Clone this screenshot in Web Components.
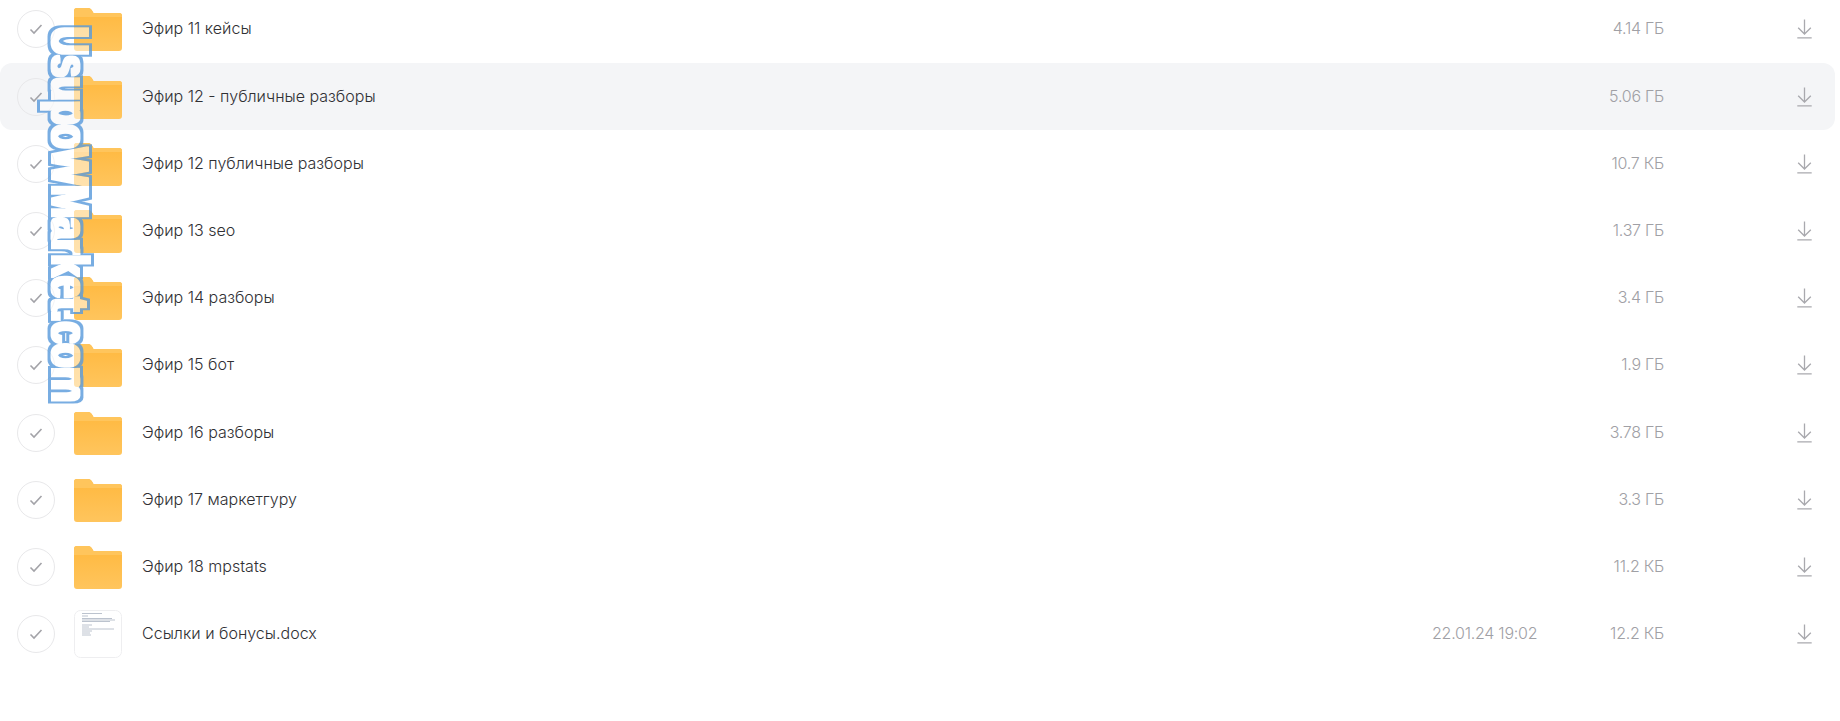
<!DOCTYPE html>
<html lang="ru"><head><meta charset="utf-8"><title>Файлы</title>
<style>
html,body{margin:0;padding:0;background:#fff;height:721px;overflow:hidden}
body{position:relative}
</style></head><body>
<template id="row-t">
<style>
:host{display:flex;align-items:center;height:67.2px;width:1835px;border-radius:12px;color:#303034;font:300 16.05px/20px Inter,"Liberation Sans",sans-serif;background:var(--bg,transparent)}
.check{width:36px;height:36px;margin-left:17px;border:1px solid #e8e8ea;border-radius:50%;display:flex;align-items:center;justify-content:center;flex:none}
.ic{display:block;margin-left:19px;flex:none;width:48px;height:48px}
.ic svg{display:block}
.name{margin-left:20px;flex:1;white-space:nowrap;padding-bottom:2px}
.date{width:104px;color:#a0a0a5;flex:none;white-space:nowrap;font-size:16px;letter-spacing:-.25px;padding-bottom:2px}
.size{width:128px;text-align:right;color:#a0a0a5;flex:none;white-space:nowrap;font-size:16px;letter-spacing:-.25px;padding-bottom:2px}
.dl{margin-left:133px;margin-right:23px;width:15px;height:20px;flex:none;display:block}
</style>
<span class="check"><svg width="14" height="12" viewBox="0 0 14 12" fill="none" stroke="#a3a3a8" stroke-width="1.6"><path d="M1.500 6.500 5 10 12.500 2"/></svg></span>
<span class="ic" id="icon"></span>
<span class="name"><slot></slot></span>
<span class="date"><slot name="date"></slot></span>
<span class="size"><slot name="size"></slot></span>
<svg class="dl" viewBox="0 0 15 20" fill="none" stroke="#a9a9ae" stroke-width="1.3"><path d="M7.500 .5v14.500M1.200 8.700 7.500 15l6.300-6.300M.3 18.800h14.400"/></svg>
</template>
<script>
const FOLDER=`<svg width="48" height="48" viewBox="0 0 48 48"><defs><linearGradient id="g" x1="0" y1="0" x2="0" y2="1"><stop offset="0" stop-color="#ffb83e"/><stop offset="1" stop-color="#ffc55d"/></linearGradient></defs><path d="M0 6a3 3 0 0 1 3-3h11c2 0 3 1 4 2.500L19.500 8H45a3 3 0 0 1 3 3v32a3 3 0 0 1-3 3H3a3 3 0 0 1-3-3z" fill="url(#g)"/><path d="M0 6a3 3 0 0 1 3-3h11c2 0 3 1 4 2.500L19.500 8H45a3 3 0 0 1 3 3v1H0z" fill="#ffc55c"/></svg>`;
const DOC=`<svg width="48" height="48" viewBox="0 0 48 48"><rect x=".5" y=".5" width="47" height="47" rx="6" fill="#fff" stroke="#eeeef0"/><g stroke="#bcc3ce" stroke-width="1"><path d="M8 3.500h20M8 6h6M8 8.500h30M8 10h33M8 11.500h28M8 15h10M8 17h7M8 19h32M8 21h10M8 23h8M8 25h9"/></g></svg>`;
class FileRow extends HTMLElement{
  constructor(){super();const r=this.attachShadow({mode:"open"});
    r.appendChild(document.getElementById("row-t").content.cloneNode(true));}
  connectedCallback(){this.shadowRoot.getElementById("icon").innerHTML=this.getAttribute("kind")==="doc"?DOC:FOLDER;}
}
customElements.define("file-row",FileRow);
class FileList extends HTMLElement{
  constructor(){super();this.attachShadow({mode:"open"}).innerHTML=`<style>:host{display:block;margin-top:-4.2px}</style><slot></slot>`;}
}
customElements.define("file-list",FileList);
class WaterMark extends HTMLElement{
  constructor(){super();this.attachShadow({mode:"open"}).innerHTML=`<style>:host{position:absolute;left:32px;top:21px;pointer-events:none;transform-origin:0 0;transform:scaleY(.75)}
  .t{display:block;writing-mode:vertical-rl;font:700 52px/60px "Liberation Sans",sans-serif;color:#000;white-space:nowrap;filter:url(#wm);padding:8px}
  svg{position:absolute;width:0;height:0}</style>
  <svg><filter id="wm" x="-30%" y="-5%" width="160%" height="110%" color-interpolation-filters="sRGB">
  <feMorphology in="SourceAlpha" operator="dilate" radius="1.2 2" result="in"/>
  <feMorphology in="SourceAlpha" operator="dilate" radius="3.8 5.4" result="out"/>
  <feComposite in="out" in2="in" operator="out" result="ring"/>
  <feFlood flood-color="#5a9bdc" flood-opacity=".82"/><feComposite in2="ring" operator="in" result="blue"/>
  <feFlood flood-color="#fff" flood-opacity=".5"/><feComposite in2="in" operator="in" result="white"/>
  <feMerge><feMergeNode in="white"/><feMergeNode in="blue"/></feMerge></filter></svg>
  <span class="t"><slot></slot></span>`;}
}
customElements.define("water-mark",WaterMark);
</script>
<file-list>
<file-row><span>Эфир 11 кейсы</span><span slot="size">4.14 ГБ</span></file-row>
<file-row style="--bg:#f4f5f7"><span>Эфир 12 - публичные разборы</span><span slot="size">5.06 ГБ</span></file-row>
<file-row><span>Эфир 12 публичные разборы</span><span slot="size">10.7 КБ</span></file-row>
<file-row><span>Эфир 13 seo</span><span slot="size">1.37 ГБ</span></file-row>
<file-row><span>Эфир 14 разборы</span><span slot="size">3.4 ГБ</span></file-row>
<file-row><span>Эфир 15 бот</span><span slot="size">1.9 ГБ</span></file-row>
<file-row><span>Эфир 16 разборы</span><span slot="size">3.78 ГБ</span></file-row>
<file-row><span>Эфир 17 маркетгуру</span><span slot="size">3.3 ГБ</span></file-row>
<file-row><span>Эфир 18 mpstats</span><span slot="size">11.2 КБ</span></file-row>
<file-row kind="doc"><span>Ссылки и бонусы.docx</span><span slot="date">22.01.24 19:02</span><span slot="size">12.2 КБ</span></file-row>
</file-list>
<water-mark>UsupoWMarket.com</water-mark>
</body></html>
